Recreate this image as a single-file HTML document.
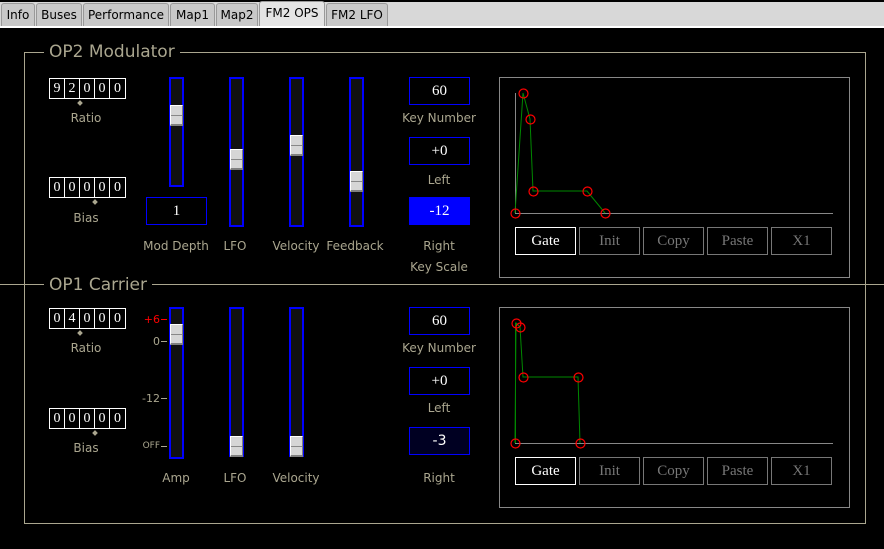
<!DOCTYPE html>
<html><head><meta charset="utf-8"><style>
*{margin:0;padding:0;box-sizing:border-box}
body{width:884px;height:549px;background:#000;position:relative;overflow:hidden;font-family:"DejaVu Sans","Liberation Sans",sans-serif}
.a{position:absolute}
.tabbar{left:0;top:0;width:884px;height:28px;background:#d8d8d8;border-top:2px solid #000;border-bottom:2px solid #fff}
.tab{position:absolute;top:3px;height:23px;background:#c8c8c8;border:1px solid #999;border-bottom:none;border-radius:3px 3px 0 0;font-size:12px;color:#000;text-align:center;line-height:22px}
.tab.on{top:1px;height:25px;background:#e4e4e4;line-height:22px}
.lbl{position:absolute;color:#aaa68f;font-size:12px;text-align:center;white-space:nowrap}
.title{position:absolute;color:#aaa68f;font-size:17px;background:#000;padding:0 5px;line-height:20px}
.line{position:absolute;background:#aaa68f}
.dig{position:absolute;height:21px;border:1px solid #fff;display:flex}
.dig span{width:15px;border-right:1px solid #fff;color:#fff;font-family:"Liberation Serif",serif;font-size:14px;text-align:center;line-height:19px}
.dig span:last-child{border-right:none}
.dot{position:absolute;width:4px;height:4px;background:#aaa68f;transform:rotate(45deg)}
.trk{position:absolute;width:15px;background:#111;border:2px solid #0000ff}
.hdl{position:absolute;left:-1px;width:13px;height:21px;background:#d6d6d6;border-top:1px solid #fff;border-left:1px solid #fff;border-bottom:2px solid #808080;border-right:1px solid #808080}
.hdl:after{content:"";position:absolute;left:0;right:0;top:9px;height:1px;background:#888}
.box{position:absolute;border:1px solid #00f;color:#fff;font-family:"Liberation Serif",serif;font-size:15px;text-align:center}
.btn{position:absolute;width:61px;height:28px;border:1px solid #777;color:#777;font-family:"Liberation Serif",serif;font-size:15px;text-align:center;line-height:26px}
.btn.g{border-color:#fff;color:#fff}
.tick{position:absolute;color:#aaa68f;font-size:10px;text-align:right;width:30px}
</style></head><body>
<div class="a tabbar"></div>
<div class="tab" style="left:1px;width:34px">Info</div>
<div class="tab" style="left:36px;width:46px">Buses</div>
<div class="tab" style="left:83px;width:86px">Performance</div>
<div class="tab" style="left:170px;width:45px">Map1</div>
<div class="tab" style="left:216px;width:42px">Map2</div>
<div class="tab on" style="left:259px;width:66px">FM2 OPS</div>
<div class="tab" style="left:326px;width:62px">FM2 LFO</div>

<div class="line" style="left:24px;top:52px;width:842px;height:1px"></div>
<div class="line" style="left:24px;top:52px;width:1px;height:472px"></div>
<div class="line" style="left:865px;top:52px;width:1px;height:472px"></div>
<div class="line" style="left:24px;top:523px;width:842px;height:1px"></div>
<div class="line" style="left:0px;top:284px;width:884px;height:1px"></div>
<div class="title" style="left:44px;top:42px">OP2 Modulator</div>
<div class="title" style="left:44px;top:275px">OP1 Carrier</div>

<div class="dig" style="left:49px;top:78px"><span>9</span><span>2</span><span>0</span><span>0</span><span>0</span></div>
<div class="dot" style="left:78px;top:101px"></div>
<div class="lbl" style="left:46px;top:111px;width:80px">Ratio</div>
<div class="dig" style="left:49px;top:177px"><span>0</span><span>0</span><span>0</span><span>0</span><span>0</span></div>
<div class="dot" style="left:93px;top:200px"></div>
<div class="lbl" style="left:46px;top:211px;width:80px">Bias</div>

<div class="trk" style="left:169px;top:77px;height:110px"><div class="hdl" style="top:26px"></div></div>
<div class="trk" style="left:229px;top:77px;height:150px"><div class="hdl" style="top:70px"></div></div>
<div class="trk" style="left:289px;top:77px;height:150px"><div class="hdl" style="top:56px"></div></div>
<div class="trk" style="left:349px;top:77px;height:150px"><div class="hdl" style="top:92px"></div></div>
<div class="box" style="left:146px;top:197px;width:61px;height:28px;line-height:26px">1</div>
<div class="lbl" style="left:136px;top:239px;width:80px">Mod Depth</div>
<div class="lbl" style="left:205px;top:239px;width:60px">LFO</div>
<div class="lbl" style="left:266px;top:239px;width:60px">Velocity</div>
<div class="lbl" style="left:320px;top:239px;width:70px">Feedback</div>

<div class="box" style="left:409px;top:77px;width:61px;height:28px;line-height:26px">60</div>
<div class="lbl" style="left:399px;top:111px;width:80px">Key Number</div>
<div class="box" style="left:409px;top:137px;width:61px;height:28px;line-height:26px">+0</div>
<div class="lbl" style="left:399px;top:173px;width:80px">Left</div>
<div class="box" style="left:409px;top:197px;width:61px;height:28px;line-height:26px;background:#00f">-12</div>
<div class="lbl" style="left:399px;top:239px;width:80px">Right</div>
<div class="lbl" style="left:399px;top:260px;width:80px">Key Scale</div>

<svg class="a" style="left:0;top:0" width="884" height="549">
<rect x="499.5" y="77.5" width="350" height="200" fill="none" stroke="#888"/>
<line x1="515.5" y1="93" x2="515.5" y2="213" stroke="#888"/>
<line x1="515" y1="213.5" x2="833" y2="213.5" stroke="#888"/>
<polyline points="515,213 523,93 530,119 533,191 587,191 605,213" fill="none" stroke="#080" stroke-width="1"/>
<g fill="none" stroke="#f00" stroke-width="1.2">
<circle cx="515.5" cy="213.5" r="4.5"/><circle cx="523.5" cy="93.5" r="4.5"/><circle cx="530.5" cy="119.5" r="4.5"/><circle cx="533.5" cy="191.5" r="4.5"/><circle cx="587.5" cy="191.5" r="4.5"/><circle cx="605.5" cy="213.5" r="4.5"/></g>

<rect x="499.5" y="307.5" width="350" height="200" fill="none" stroke="#888"/>
<line x1="515" y1="443.5" x2="833" y2="443.5" stroke="#888"/>
<polyline points="515,443 516,323 520,327 523,377 578,377 580,443" fill="none" stroke="#080" stroke-width="1"/>
<line x1="515.5" y1="323" x2="515.5" y2="443" stroke="#080"/>
<g fill="none" stroke="#f00" stroke-width="1.2">
<circle cx="515.5" cy="443.5" r="4.5"/><circle cx="516.5" cy="323.5" r="4.5"/><circle cx="520.5" cy="327.5" r="4.5"/><circle cx="523.5" cy="377.5" r="4.5"/><circle cx="578.5" cy="377.5" r="4.5"/><circle cx="580.5" cy="443.5" r="4.5"/></g>
<g stroke="#aaa68f"><line x1="161" y1="341.5" x2="167" y2="341.5"/><line x1="161" y1="398.5" x2="167" y2="398.5"/><line x1="161" y1="446.5" x2="167" y2="446.5"/></g>
<line x1="161" y1="319.5" x2="167" y2="319.5" stroke="#f00"/>
</svg>

<div class="btn g" style="left:515px;top:227px">Gate</div>
<div class="btn" style="left:579px;top:227px">Init</div>
<div class="btn" style="left:643px;top:227px">Copy</div>
<div class="btn" style="left:707px;top:227px">Paste</div>
<div class="btn" style="left:771px;top:227px">X1</div>

<div class="dig" style="left:49px;top:308px"><span>0</span><span>4</span><span>0</span><span>0</span><span>0</span></div>
<div class="dot" style="left:78px;top:331px"></div>
<div class="lbl" style="left:46px;top:341px;width:80px">Ratio</div>
<div class="dig" style="left:49px;top:408px"><span>0</span><span>0</span><span>0</span><span>0</span><span>0</span></div>
<div class="dot" style="left:93px;top:431px"></div>
<div class="lbl" style="left:46px;top:441px;width:80px">Bias</div>

<div class="tick" style="left:130px;top:313px;color:#f00;font-size:11px">+6</div>
<div class="tick" style="left:130px;top:335px;font-size:11px">0</div>
<div class="tick" style="left:130px;top:392px;font-size:11px">-12</div>
<div class="tick" style="left:130px;top:441px;font-size:9px">OFF</div>
<div class="trk" style="left:169px;top:307px;height:152px"><div class="hdl" style="top:15px"></div></div>
<div class="trk" style="left:229px;top:307px;height:150px"><div class="hdl" style="top:127px"></div></div>
<div class="trk" style="left:289px;top:307px;height:150px"><div class="hdl" style="top:127px"></div></div>
<div class="lbl" style="left:136px;top:471px;width:80px">Amp</div>
<div class="lbl" style="left:205px;top:471px;width:60px">LFO</div>
<div class="lbl" style="left:266px;top:471px;width:60px">Velocity</div>

<div class="box" style="left:409px;top:307px;width:61px;height:28px;line-height:26px">60</div>
<div class="lbl" style="left:399px;top:341px;width:80px">Key Number</div>
<div class="box" style="left:409px;top:367px;width:61px;height:28px;line-height:26px">+0</div>
<div class="lbl" style="left:399px;top:401px;width:80px">Left</div>
<div class="box" style="left:409px;top:427px;width:61px;height:28px;line-height:26px;background:#000022;font-family:'DejaVu Sans',sans-serif;font-size:14px">-3</div>
<div class="lbl" style="left:399px;top:471px;width:80px">Right</div>

<div class="btn g" style="left:515px;top:457px">Gate</div>
<div class="btn" style="left:579px;top:457px">Init</div>
<div class="btn" style="left:643px;top:457px">Copy</div>
<div class="btn" style="left:707px;top:457px">Paste</div>
<div class="btn" style="left:771px;top:457px">X1</div>
</body></html>
